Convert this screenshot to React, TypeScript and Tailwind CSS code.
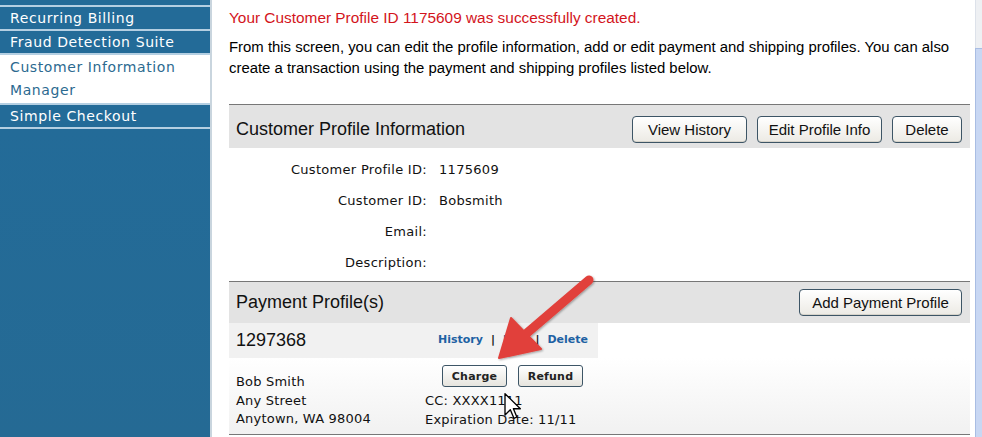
import React from "react"

const verdana = { fontFamily: '"DejaVu Sans", Verdana, sans-serif' }

function Btn({ children, className = "" }: { children: React.ReactNode; className?: string }) {
  return (
    <button
      className={`h-[27px] rounded-[4px] border border-[#3d5566] bg-gradient-to-b from-white to-[#eceae4] text-[15px] text-[#111] font-['Liberation_Sans',Arial,sans-serif] leading-none whitespace-nowrap shadow-[inset_0_-1px_0_#d6d3ca] ${className}`}
    >
      {children}
    </button>
  )
}

function SmallBtn({ children }: { children: React.ReactNode }) {
  return (
    <button
      className="h-[22px] w-[65px] rounded-[3px] border border-[#3d5566] bg-gradient-to-b from-white to-[#e6e4de] text-[11px] font-bold text-[#222] leading-none"
      style={verdana}
    >
      {children}
    </button>
  )
}

const menu = [
  { label: "Recurring Billing", active: false },
  { label: "Fraud Detection Suite", active: false },
  { label: "Customer Information Manager", active: true },
  { label: "Simple Checkout", active: false },
]

export default function App() {
  const fields = [
    ["Customer Profile ID:", "1175609"],
    ["Customer ID:", "Bobsmith"],
    ["Email:", ""],
    ["Description:", ""],
  ]

  return (
    <div className="relative w-[982px] h-[437px] overflow-hidden bg-white flex font-['Liberation_Sans',Arial,sans-serif]">
      {/* Sidebar */}
      <div className="w-[212px] shrink-0 bg-[#236b98] border-r-2 border-[#c9d5de] flex flex-col">
        <div className="h-[5px] bg-[#236b98]" />
        {menu.map((m) => (
          <div key={m.label} className="border-t-2 border-[#b4cfe2]">
            {m.active ? (
              <div
                className="bg-white text-[#2c6a90] text-[14px] tracking-[0.6px] leading-[23px] pl-[10px] pr-[16px] py-[1px]"
                style={verdana}
              >
                {m.label}
              </div>
            ) : (
              <div
                className="text-white text-[14px] tracking-[0.6px] leading-[22px] pl-[10px] whitespace-nowrap"
                style={verdana}
              >
                {m.label}
              </div>
            )}
          </div>
        ))}
        <div className="border-t-2 border-[#b4cfe2] flex-1 bg-gradient-to-b from-[#236b98] to-[#256a94]" />
      </div>

      {/* Main */}
      <div className="flex-1 pl-[17px] pr-[5px] pt-[8px]">
        <p className="text-[#d3141c] text-[15.4px] leading-[20px] whitespace-nowrap">
          Your Customer Profile ID 1175609 was successfully created.
        </p>
        <p className="mt-[9px] text-[14.9px] leading-[21px] text-black">
          From this screen, you can edit the profile information, add or edit payment and shipping profiles. You can also
          create a transaction using the payment and shipping profiles listed below.
        </p>

        {/* Customer Profile Information */}
        <div className="mt-[25px] border-t border-[#777]">
          <div className="h-[43px] pt-[5px] bg-[#e3e3e3] flex items-center justify-between pl-[7px] pr-[8px]">
            <span className="text-[18px] text-[#111]">Customer Profile Information</span>
            <div className="flex gap-[10px]">
              <Btn className="w-[115px]">View History</Btn>
              <Btn className="w-[125px]">Edit Profile Info</Btn>
              <Btn className="w-[70px]">Delete</Btn>
            </div>
          </div>
          <div className="pt-[6px] pb-[3px]">
            {fields.map(([k, v]) => (
              <div key={k} className="h-[31px] flex items-center text-[13px] tracking-[0.3px] text-[#111]" style={verdana}>
                <span className="w-[198px] text-right">{k}</span>
                <span className="ml-[12px]">{v}</span>
              </div>
            ))}
          </div>
        </div>

        {/* Payment Profiles */}
        <div className="border-t border-[#777] border-b bg-gradient-to-b from-white via-white to-[#f1f1f1]">
          <div className="h-[41px] bg-[#e3e3e3] flex items-center justify-between pl-[7px] pr-[8px]">
            <span className="text-[18px] text-[#111]">Payment Profile(s)</span>
            <Btn className="w-[163px]">Add Payment Profile</Btn>
          </div>
          <div className="w-[369px] h-[35px] bg-[#f1f1f1] flex items-center pl-[7px]">
            <span className="text-[18px] text-[#111] w-[202px] shrink-0">1297368</span>
            <span className="text-[11px] font-bold text-[#1e61a3] whitespace-nowrap" style={verdana}>
              History<span className="text-[#111] mx-[8px]">|</span>Edit<span className="text-[#111] mx-[8px]">|</span>Delete
            </span>
          </div>
          <div className="h-[76px] flex pl-[7px] text-[13px] text-[#111] tracking-[0.2px]" style={verdana}>
            <div className="w-[189px] pt-[15px] leading-[18.5px]">
              <div>Bob Smith</div>
              <div>Any Street</div>
              <div>Anytown, WA 98004</div>
            </div>
            <div className="pt-[7px]">
              <div className="flex gap-[11px] pl-[17px]">
                <SmallBtn>Charge</SmallBtn>
                <SmallBtn>Refund</SmallBtn>
              </div>
              <div className="leading-[18.5px] mt-[5px]">
                <div>CC: XXXX1111</div>
                <div>Expiration Date: 11/11</div>
              </div>
            </div>
          </div>
        </div>
      </div>

      {/* Scrollbar */}
      <div className="w-[7px] shrink-0 flex flex-col">
        <div className="h-[48px] bg-[#eef0f3] border-l border-[#dde2ea]" />
        <div className="flex-1 bg-[#c8d7f3] border-l border-t border-[#a9bde3]" />
      </div>

      {/* Annotation arrow */}
      <svg className="absolute left-0 top-0 pointer-events-none" width="982" height="437">
        <defs>
          <filter id="sh" x="-20%" y="-20%" width="140%" height="140%">
            <feDropShadow dx="1" dy="1" stdDeviation="1.2" floodColor="#000" floodOpacity="0.35" />
          </filter>
        </defs>
        <g filter="url(#sh)" fill="#e1403b" stroke="#e1403b">
          <line x1="589" y1="280" x2="527" y2="333" strokeWidth="9" strokeLinecap="round" />
          <polygon points="499,358 511,318 541,349" strokeWidth="2" strokeLinejoin="round" />
        </g>
      </svg>

      {/* Mouse cursor */}
      <svg className="absolute left-[503px] top-[393px] pointer-events-none" width="20" height="28" viewBox="0 0 13 21">
        <path d="M0.5,0.5 L0.5,16.5 L4.5,12.5 L7.2,19 L9.4,18 L6.8,11.8 L12,11.8 Z" fill="#fff" stroke="#000" strokeWidth="1" strokeLinejoin="round" />
      </svg>
    </div>
  )
}
